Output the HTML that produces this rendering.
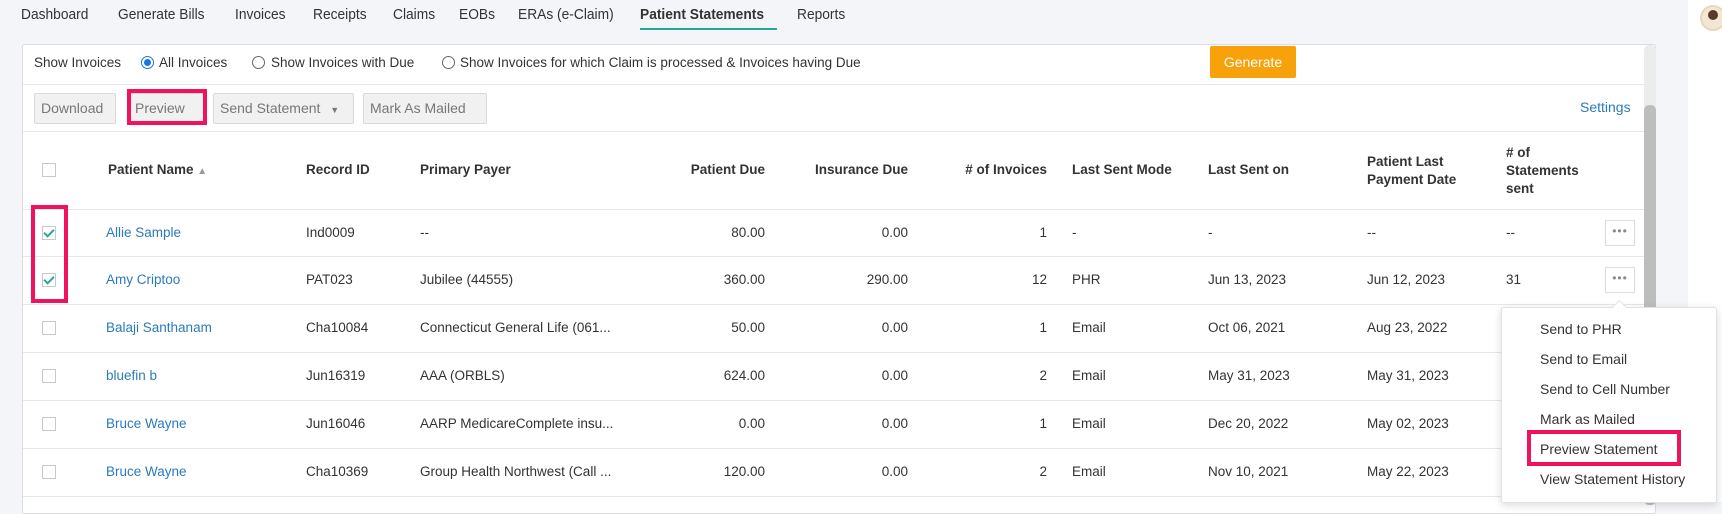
<!DOCTYPE html>
<html><head><meta charset="utf-8"><style>
*{margin:0;padding:0;box-sizing:border-box}
body{width:1722px;height:502px;overflow:hidden;background:#f4f5f8;font-family:"Liberation Sans",sans-serif;font-size:13.5px;color:#333;position:relative}
.a{position:absolute;white-space:nowrap}
.nav{top:7px;font-size:14.5px;color:#333;transform:scaleX(0.95);transform-origin:left}
.card{position:absolute;left:22px;top:44px;width:1634px;height:470px;background:#fff;border:1px solid #dcdde2;border-radius:3px}
.hl{position:absolute;left:23px;width:1621px;height:1px;background:#e6e7ea}
.btn{position:absolute;top:93px;height:31px;background:#f1f1f1;border:1px solid #d9d9d9;border-radius:2px;color:#777;font-size:14px;line-height:29px;padding-left:6px}
.cb{position:absolute;width:14px;height:14px;border:1px solid #c9c9c9;background:#fff}
.cb.on::after{content:"";position:absolute;left:3px;top:0px;width:4px;height:8px;border:solid #2aa59a;border-width:0 2px 2px 0;transform:rotate(45deg)}
.th{font-weight:bold;color:#333;font-size:13.5px}
.lk{color:#2b7bb9}
.r{text-align:right}
.dots{position:absolute;left:1605px;width:30px;height:26px;border:1px solid #ddd;background:#fff;color:#888;font-size:12px;text-align:center;line-height:20px;letter-spacing:1px}
.red{position:absolute;border:4px solid #f0125a}
.mi{position:absolute;left:1540px;font-size:14px;color:#333}
</style></head><body>
<div class="a nav" style="left:21px">Dashboard</div>
<div class="a nav" style="left:118px">Generate Bills</div>
<div class="a nav" style="left:235px">Invoices</div>
<div class="a nav" style="left:313px">Receipts</div>
<div class="a nav" style="left:393px">Claims</div>
<div class="a nav" style="left:459px">EOBs</div>
<div class="a nav" style="left:518px">ERAs (e-Claim)</div>
<div class="a nav" style="left:640px;font-weight:bold">Patient Statements</div>
<div class="a" style="left:640px;top:28px;width:137px;height:2px;background:#2aa59a"></div>
<div class="a nav" style="left:797px">Reports</div>
<div class="a" style="left:1688px;top:0;width:34px;height:502px;background:#fff"></div>
<div class="a" style="left:1700px;top:5px;width:26px;height:26px;border-radius:50%;background:#f3e6d3;border:2px solid #e8d6bd"></div>
<div class="a" style="left:1708px;top:10px;width:10px;height:10px;border-radius:50%;background:#5a3a2a"></div>
<div class="card"></div>
<div class="a" style="left:34px;top:55px;font-size:13.5px">Show Invoices</div>
<div class="a" style="left:141px;top:56px;width:13px;height:13px;border-radius:50%;border:1px solid #1a73e8;background:#fff"></div>
<div class="a" style="left:144px;top:59px;width:7px;height:7px;border-radius:50%;background:#1a73e8"></div>
<div class="a" style="left:159px;top:55px">All Invoices</div>
<div class="a" style="left:252px;top:56px;width:13px;height:13px;border-radius:50%;border:1px solid #666"></div>
<div class="a" style="left:271px;top:55px">Show Invoices with Due</div>
<div class="a" style="left:442px;top:56px;width:13px;height:13px;border-radius:50%;border:1px solid #666"></div>
<div class="a" style="left:460px;top:55px">Show Invoices for which Claim is processed &amp; Invoices having Due</div>
<div class="a" style="left:1210px;top:46px;width:86px;height:32px;background:#f7a10b;border-radius:2px;color:#fff;font-size:14px;text-align:center;line-height:32px">Generate</div>
<div class="hl" style="top:84px"></div>
<div class="btn" style="left:34px;width:82px">Download</div>
<div class="btn" style="left:128px;width:78px">Preview</div>
<div class="red" style="left:127px;top:89px;width:80px;height:36px"></div>
<div class="btn" style="left:213px;width:141px">Send Statement <span style="font-size:9px;margin-left:6px">▼</span></div>
<div class="btn" style="left:363px;width:124px">Mark As Mailed</div>
<div class="a lk" style="left:1580px;top:99px;font-size:14px">Settings</div>
<div class="hl" style="top:131px"></div>
<div class="a" style="left:1644px;top:45px;width:12px;height:460px;background:#ececec;border-radius:5px"></div>
<div class="a" style="left:1644px;top:105px;width:12px;height:400px;background:#bdbdbd;border-radius:5px"></div>
<div class="cb" style="left:42px;top:163px"></div>
<div class="a th" style="left:108px;top:162px">Patient Name <span style="color:#999;font-size:10px">▲</span></div>
<div class="a th" style="left:306px;top:162px">Record ID</div>
<div class="a th" style="left:420px;top:162px">Primary Payer</div>
<div class="a th r" style="right:957px;top:162px">Patient Due</div>
<div class="a th r" style="right:814px;top:162px">Insurance Due</div>
<div class="a th r" style="right:675px;top:162px"># of Invoices</div>
<div class="a th" style="left:1072px;top:162px">Last Sent Mode</div>
<div class="a th" style="left:1208px;top:162px">Last Sent on</div>
<div class="a th" style="left:1367px;top:153px;line-height:18px">Patient Last<br>Payment Date</div>
<div class="a th" style="left:1506px;top:144px;line-height:18px"># of<br>Statements<br>sent</div>
<div class="hl" style="top:209px"></div>
<div class="hl" style="top:256px"></div>
<div class="hl" style="top:304px"></div>
<div class="hl" style="top:352px"></div>
<div class="hl" style="top:400px"></div>
<div class="hl" style="top:448px"></div>
<div class="hl" style="top:496px"></div>

<div class="cb on" style="left:42px;top:226px"></div>
<div class="a lk" style="left:106px;top:225px">Allie Sample</div>
<div class="a" style="left:306px;top:225px">Ind0009</div>
<div class="a" style="left:420px;top:225px">--</div>
<div class="a r" style="right:957px;top:225px">80.00</div>
<div class="a r" style="right:814px;top:225px">0.00</div>
<div class="a r" style="right:675px;top:225px">1</div>
<div class="a" style="left:1072px;top:225px">-</div>
<div class="a" style="left:1208px;top:225px">-</div>
<div class="a" style="left:1367px;top:225px">--</div>
<div class="a" style="left:1506px;top:225px">--</div>
<div class="dots" style="top:220px">•••</div>

<div class="cb on" style="left:42px;top:273px"></div>
<div class="a lk" style="left:106px;top:272px">Amy Criptoo</div>
<div class="a" style="left:306px;top:272px">PAT023</div>
<div class="a" style="left:420px;top:272px">Jubilee (44555)</div>
<div class="a r" style="right:957px;top:272px">360.00</div>
<div class="a r" style="right:814px;top:272px">290.00</div>
<div class="a r" style="right:675px;top:272px">12</div>
<div class="a" style="left:1072px;top:272px">PHR</div>
<div class="a" style="left:1208px;top:272px">Jun 13, 2023</div>
<div class="a" style="left:1367px;top:272px">Jun 12, 2023</div>
<div class="a" style="left:1506px;top:272px">31</div>
<div class="dots" style="top:267px">•••</div>
<div class="red" style="left:31px;top:205px;width:37px;height:98px"></div>

<div class="cb" style="left:42px;top:321px"></div>
<div class="a lk" style="left:106px;top:320px">Balaji Santhanam</div>
<div class="a" style="left:306px;top:320px">Cha10084</div>
<div class="a" style="left:420px;top:320px">Connecticut General Life (061...</div>
<div class="a r" style="right:957px;top:320px">50.00</div>
<div class="a r" style="right:814px;top:320px">0.00</div>
<div class="a r" style="right:675px;top:320px">1</div>
<div class="a" style="left:1072px;top:320px">Email</div>
<div class="a" style="left:1208px;top:320px">Oct 06, 2021</div>
<div class="a" style="left:1367px;top:320px">Aug 23, 2022</div>

<div class="cb" style="left:42px;top:369px"></div>
<div class="a lk" style="left:106px;top:368px">bluefin b</div>
<div class="a" style="left:306px;top:368px">Jun16319</div>
<div class="a" style="left:420px;top:368px">AAA (ORBLS)</div>
<div class="a r" style="right:957px;top:368px">624.00</div>
<div class="a r" style="right:814px;top:368px">0.00</div>
<div class="a r" style="right:675px;top:368px">2</div>
<div class="a" style="left:1072px;top:368px">Email</div>
<div class="a" style="left:1208px;top:368px">May 31, 2023</div>
<div class="a" style="left:1367px;top:368px">May 31, 2023</div>

<div class="cb" style="left:42px;top:417px"></div>
<div class="a lk" style="left:106px;top:416px">Bruce Wayne</div>
<div class="a" style="left:306px;top:416px">Jun16046</div>
<div class="a" style="left:420px;top:416px">AARP MedicareComplete insu...</div>
<div class="a r" style="right:957px;top:416px">0.00</div>
<div class="a r" style="right:814px;top:416px">0.00</div>
<div class="a r" style="right:675px;top:416px">1</div>
<div class="a" style="left:1072px;top:416px">Email</div>
<div class="a" style="left:1208px;top:416px">Dec 20, 2022</div>
<div class="a" style="left:1367px;top:416px">May 02, 2023</div>

<div class="cb" style="left:42px;top:465px"></div>
<div class="a lk" style="left:106px;top:464px">Bruce Wayne</div>
<div class="a" style="left:306px;top:464px">Cha10369</div>
<div class="a" style="left:420px;top:464px">Group Health Northwest (Call ...</div>
<div class="a r" style="right:957px;top:464px">120.00</div>
<div class="a r" style="right:814px;top:464px">0.00</div>
<div class="a r" style="right:675px;top:464px">2</div>
<div class="a" style="left:1072px;top:464px">Email</div>
<div class="a" style="left:1208px;top:464px">Nov 10, 2021</div>
<div class="a" style="left:1367px;top:464px">May 22, 2023</div>

<div class="a" style="left:1501px;top:307px;width:216px;height:196px;background:#fff;border:1px solid #e2e2e2;border-radius:3px;box-shadow:0 2px 8px rgba(0,0,0,.15)"></div>
<div class="a" style="left:1614px;top:302px;width:11px;height:11px;background:#fff;transform:rotate(45deg);border-left:1px solid #e2e2e2;border-top:1px solid #e2e2e2"></div>
<div class="mi" style="top:321px">Send to PHR</div>
<div class="mi" style="top:351px">Send to Email</div>
<div class="mi" style="top:381px">Send to Cell Number</div>
<div class="mi" style="top:411px">Mark as Mailed</div>
<div class="mi" style="top:441px">Preview Statement</div>
<div class="red" style="left:1527px;top:430px;width:154px;height:36px"></div>
<div class="mi" style="top:471px">View Statement History</div>
</body></html>
